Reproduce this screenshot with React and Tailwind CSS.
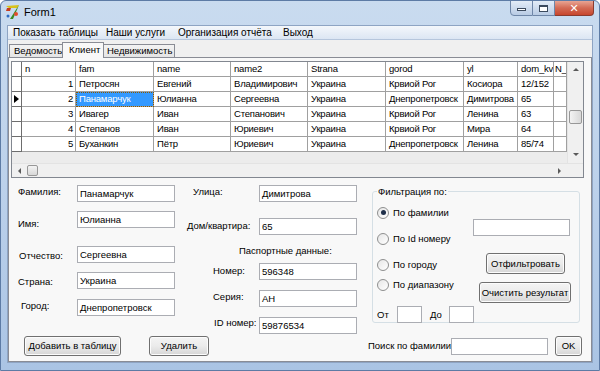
const rows = [
  ["1", "Петросян", "Евгений", "Владимирович", "Украина", "Крвиой Рог", "Косиора", "12/152"],
  ["2", "Панамарчук", "Юлианна", "Сергеевна", "Украина", "Днепропетровск", "Димитрова", "65"],
  ["3", "Ивагер", "Иван", "Степанович", "Украина", "Крвиой Рог", "Ленина", "63"],
  ["4", "Степанов", "Иван", "Юриевич", "Украина", "Крвиой Рог", "Мира", "64"],
  ["5", "Буханкин", "Пётр", "Юриевич", "Украина", "Днепропетровск", "Ленина", "85/74"],
];
const headers = ["n", "fam", "name", "name2", "Strana", "gorod", "yl", "dom_kv", "N_"];

function TextBox({ value = "", className = "" }) {
  return (
    <div className={`h-[17px] border border-[#abadb3] bg-white pl-[2px] text-[9.5px] leading-[15px] whitespace-nowrap overflow-hidden ${className}`}>
      {value}
    </div>
  );
}

function Button({ children, className = "" }) {
  return (
    <div className={`flex items-center justify-center rounded-[3px] border border-[#707070] bg-gradient-to-b from-[#f4f4f4] via-[#ebebeb] to-[#d6d6d6] text-[9.5px] whitespace-nowrap shadow-[inset_0_0_0_1px_#fcfcfc] ${className}`}>
      {children}
    </div>
  );
}

function Radio({ checked, label, className = "" }) {
  return (
    <div className={`flex items-center h-[13px] ${className}`}>
      <div className="w-[12px] h-[12px] rounded-full border border-[#8e8f8f] bg-gradient-to-br from-[#e6e6e6] to-[#ffffff] flex items-center justify-center">
        {checked && <div className="w-[5px] h-[5px] rounded-full bg-[#1f2f4a]" />}
      </div>
      <span className="ml-[4px] text-[9.5px] whitespace-nowrap">{label}</span>
    </div>
  );
}

function Arrow({ dir }) {
  const pts = {
    up: "1,5 4,2 7,5",
    down: "1,2 4,5 7,2",
    left: "5,1 2,4 5,7",
    right: "2,1 5,4 2,7",
  }[dir];
  return (
    <svg width="8" height="8" viewBox="0 0 8 8">
      <polygon points={pts} fill="#5a5a5a" />
    </svg>
  );
}

function AppIcon() {
  return (
    <svg width="16" height="16" viewBox="0 0 16 16">
      <polygon points="1,2 14,1 12,4 4,4" fill="#d9c21a" />
      <polygon points="12,4 14,1 8,15 5,15" fill="#3a8a24" />
      <polygon points="2,4 6,4 5,7 1,7" fill="#c73a1f" />
      <circle cx="11" cy="10" r="2" fill="#e24b2a" />
      <circle cx="3" cy="12" r="1.5" fill="#2f6bc2" />
    </svg>
  );
}

function DataGrid() {
  return (
    <div className="w-[573px] h-[117px] border border-[#828790] bg-[#ececec] flex flex-col">
      <div className="flex h-[101px]">
        <div className="w-[555px] flex flex-col">
          <div className="grid grid-cols-[10px_54px_78px_77px_77px_78px_78px_54px_36px_13px] text-[9.5px] tracking-[-0.2px] leading-[14px]">
            <div className="h-[15px] bg-white border-r border-b border-[#6d6d6d]" />
            {headers.map((h, k) => (
              <div key={h} className={`h-[15px] bg-white border-r border-b border-[#a0a0a0] overflow-hidden whitespace-nowrap ${k === 8 ? "pl-[1px]" : "pl-[3px]"}`}>
                {h}
              </div>
            ))}
            {rows.map((r, i) => (
              <div key={i} className="contents">
                <div className="h-[15px] bg-white border-r border-b border-[#6d6d6d] flex items-center justify-center">
                  {i === 1 && (
                    <svg width="5" height="8" viewBox="0 0 5 8">
                      <polygon points="0,0 5,4 0,8" fill="#000" />
                    </svg>
                  )}
                </div>
                {r.map((c, j) => (
                  <div
                    key={j}
                    className={`h-[15px] border-r border-b border-[#a0a0a0] overflow-hidden whitespace-nowrap ${
                      j === 0 ? "text-right pr-[2px] bg-white" : "pl-[3px]"
                    } ${i === 1 && j === 1 ? "bg-[#3399ff] text-white outline outline-1 outline-dotted outline-[#8a5a00] -outline-offset-1" : "bg-white"}`}
                  >
                    {c}
                  </div>
                ))}
                <div className="h-[15px] bg-white border-r border-b border-[#a0a0a0]" />
              </div>
            ))}
          </div>
        </div>
        <div className="w-[16px] bg-[#f0f0f0] border-l border-[#e3e3e3] flex flex-col items-center">
          <div className="h-[16px] flex items-center justify-center"><Arrow dir="up" /></div>
          <div className="flex-1 w-full flex flex-col">
            <div className="h-[32px]" />
            <div className="mx-[1px] h-[14px] rounded-[2px] border border-[#979797] bg-gradient-to-r from-[#f3f3f3] to-[#d8d8d8]" />
          </div>
          <div className="h-[16px] flex items-center justify-center"><Arrow dir="down" /></div>
        </div>
      </div>
      <div className="flex h-[14px] bg-[#f0f0f0] border-t border-[#e3e3e3]">
        <div className="w-[15px] flex items-center justify-center"><Arrow dir="left" /></div>
        <div className="w-[11px] my-[1px] rounded-[2px] border border-[#979797] bg-gradient-to-b from-[#f3f3f3] to-[#d8d8d8]" />
        <div className="flex-1" />
        <div className="w-[15px] flex items-center justify-center"><Arrow dir="right" /></div>
        <div className="w-[16px]" />
      </div>
    </div>
  );
}

export default function App() {
  return (
    <div className="w-[600px] h-[371px] overflow-hidden font-['Liberation_Sans',Arial,sans-serif] text-black flex flex-col border border-[#5d7ba5] rounded-t-[6px] bg-gradient-to-b from-[#c9dbef] via-[#bcd1eb] to-[#aac4e4]">
      {/* title bar */}
      <div className="h-[24px] flex items-start shrink-0">
        <div className="mt-[3px] ml-[4px]"><AppIcon /></div>
        <span className="ml-[3px] mt-[3px] text-[11px] leading-[16px]">Form1</span>
        <div className="flex-1" />
        <div className="flex h-[16px] mr-[5px] -mt-px">
          <div className="w-[23px] border border-[#6e86a8] rounded-bl-[4px] bg-gradient-to-b from-[#e3ecf7] to-[#b8cbe4] flex items-center justify-center">
            <div className="w-[9px] h-[3px] border border-[#3b4a5e] bg-white mt-[3px]" />
          </div>
          <div className="w-[22px] border-y border-r border-[#6e86a8] bg-gradient-to-b from-[#e3ecf7] to-[#b8cbe4] flex items-center justify-center">
            <div className="w-[9px] h-[7px] border border-[#3b4a5e] border-t-2 bg-white" />
          </div>
          <div className="w-[39px] border-y border-r border-[#8a3a2e] rounded-br-[4px] bg-gradient-to-b from-[#e8a493] via-[#d36a54] to-[#c7452c] flex items-center justify-center">
            <span className="text-white text-[11px] font-bold leading-none font-['DejaVu_Sans',sans-serif]">✕</span>
          </div>
        </div>
      </div>

      {/* client area */}
      <div className="mx-[6px] mb-[7px] flex-1 border border-[#8ea4c3] bg-[#f0f0f0] flex flex-col">
        <div className="h-[14px] flex items-center text-[10px] bg-gradient-to-b from-[#f4f7fb] to-[#dce6f3] border-b border-[#b6c6dc] whitespace-nowrap">
          <span className="ml-[5px] w-[93px]">Показать таблицы</span>
          <span className="w-[72px]">Наши услуги</span>
          <span className="w-[105px]">Организация отчёта</span>
          <span>Выход</span>
        </div>

        {/* tabs */}
        <div className="h-[17px] flex items-end pl-[1px] text-[9.5px] relative z-10 whitespace-nowrap">
          <div className="h-[13px] w-[53px] pl-[4px] flex items-center border-t border-l border-[#898c95] bg-gradient-to-b from-[#f3f3f3] to-[#e4e4e4]">Ведомость</div>
          <div className="h-[16px] w-[42px] pl-[6px] flex items-center border-t border-x border-[#898c95] bg-[#f8f8f8] -mb-px pb-px">Клиент</div>
          <div className="h-[13px] w-[71px] pl-[3px] flex items-center border-t border-r border-[#898c95] bg-gradient-to-b from-[#f3f3f3] to-[#e4e4e4]">Недвижимость</div>
        </div>

        <div className="flex-1 border border-[#898c95] bg-[#f8f8f8] pl-[2px] pt-[3px] flex flex-col">
          <DataGrid />

          {/* form fields */}
          <div className="flex text-[9.5px] leading-[13px] whitespace-nowrap">
            {/* left column */}
            <div className="w-[169px] pl-[7px] flex flex-col">
              <div className="flex items-start mt-[7px]">
                <span className="w-[59px] mt-[0px]">Фамилия:</span>
                <TextBox value="Панамарчук" className="w-[98px]" />
              </div>
              <div className="flex items-start mt-[9px]">
                <span className="w-[59px] mt-[6px]">Имя:</span>
                <TextBox value="Юлианна" className="w-[98px]" />
              </div>
              <div className="flex items-start mt-[16px]">
                <span className="w-[59px] mt-[3px] pl-[1px]">Отчество:</span>
                <TextBox value="Сергеевна" className="w-[98px]" />
              </div>
              <div className="flex items-start mt-[9px]">
                <span className="w-[59px] mt-[3px]">Страна:</span>
                <TextBox value="Украина" className="w-[98px]" />
              </div>
              <div className="flex items-start mt-[10px]">
                <span className="w-[59px] mt-[0px] pl-[3px]">Город:</span>
                <TextBox value="Днепропетровск" className="w-[98px]" />
              </div>
            </div>

            {/* middle column */}
            <div className="w-[182px] flex flex-col">
              <div className="flex items-start mt-[7px]">
                <span className="w-[79px] pl-[13px] mt-[0px]">Улица:</span>
                <TextBox value="Димитрова" className="w-[98px]" />
              </div>
              <div className="flex items-start mt-[16px]">
                <span className="w-[79px] pl-[7px] mt-[1px]">Дом/квартира:</span>
                <TextBox value="65" className="w-[98px]" />
              </div>
              <span className="mt-[9px] pl-[59px]">Паспортные данные:</span>
              <div className="flex items-start mt-[6px]">
                <span className="w-[79px] pl-[33px] mt-[1px]">Номер:</span>
                <TextBox value="596348" className="w-[98px]" />
              </div>
              <div className="flex items-start mt-[10px]">
                <span className="w-[79px] pl-[33px] mt-[0px]">Серия:</span>
                <TextBox value="АН" className="w-[98px]" />
              </div>
              <div className="flex items-start mt-[10px]">
                <span className="w-[79px] pl-[34px] mt-[-1px]">ID номер:</span>
                <TextBox value="59876534" className="w-[98px] h-[16px]" />
              </div>
            </div>

            {/* filter group */}
            <div className="ml-[10px] mt-[13px] w-[208px] h-[132px] border border-[#d5dfe5] rounded-[3px] relative flex flex-col">
              <span className="absolute -top-[7px] left-[4px] px-[1px] bg-[#f8f8f8]">Фильтрация по:</span>
              <div className="flex">
                <div className="w-[100px] pl-[4px] flex flex-col">
                  <Radio checked label="По фамилии" className="mt-[14px]" />
                  <Radio label="По Id номеру" className="mt-[13px]" />
                  <Radio label="По городу" className="mt-[13px]" />
                  <Radio label="По диапазону" className="mt-[7px]" />
                </div>
                <div className="flex flex-col">
                  <TextBox className="mt-[27px] w-[97px] h-[16px]" />
                  <Button className="mt-[17px] ml-[13px] w-[79px] h-[21px]">Отфильтровать</Button>
                  <Button className="mt-[8px] ml-[6px] w-[92px] h-[21px]">Очистить результат</Button>
                </div>
              </div>
              <div className="flex items-center mt-[3px] pl-[4px]">
                <span className="w-[20px]">От</span>
                <TextBox className="w-[25px] h-[16px]" />
                <span className="ml-[8px] w-[19px]">До</span>
                <TextBox className="w-[25px] h-[16px]" />
              </div>
            </div>
          </div>

          {/* bottom row */}
          <div className="flex items-center mt-[2px] text-[9.5px] whitespace-nowrap">
            <Button className="ml-[13px] w-[97px] h-[20px]">Добавить в таблицу</Button>
            <Button className="ml-[28px] w-[60px] h-[20px]">Удалить</Button>
            <span className="ml-[159px] w-[83px]">Поиск по фамилии:</span>
            <TextBox className="w-[97px] h-[16px]" />
            <Button className="ml-[7px] w-[27px] h-[20px]">OK</Button>
          </div>
        </div>
      </div>
    </div>
  );
}
